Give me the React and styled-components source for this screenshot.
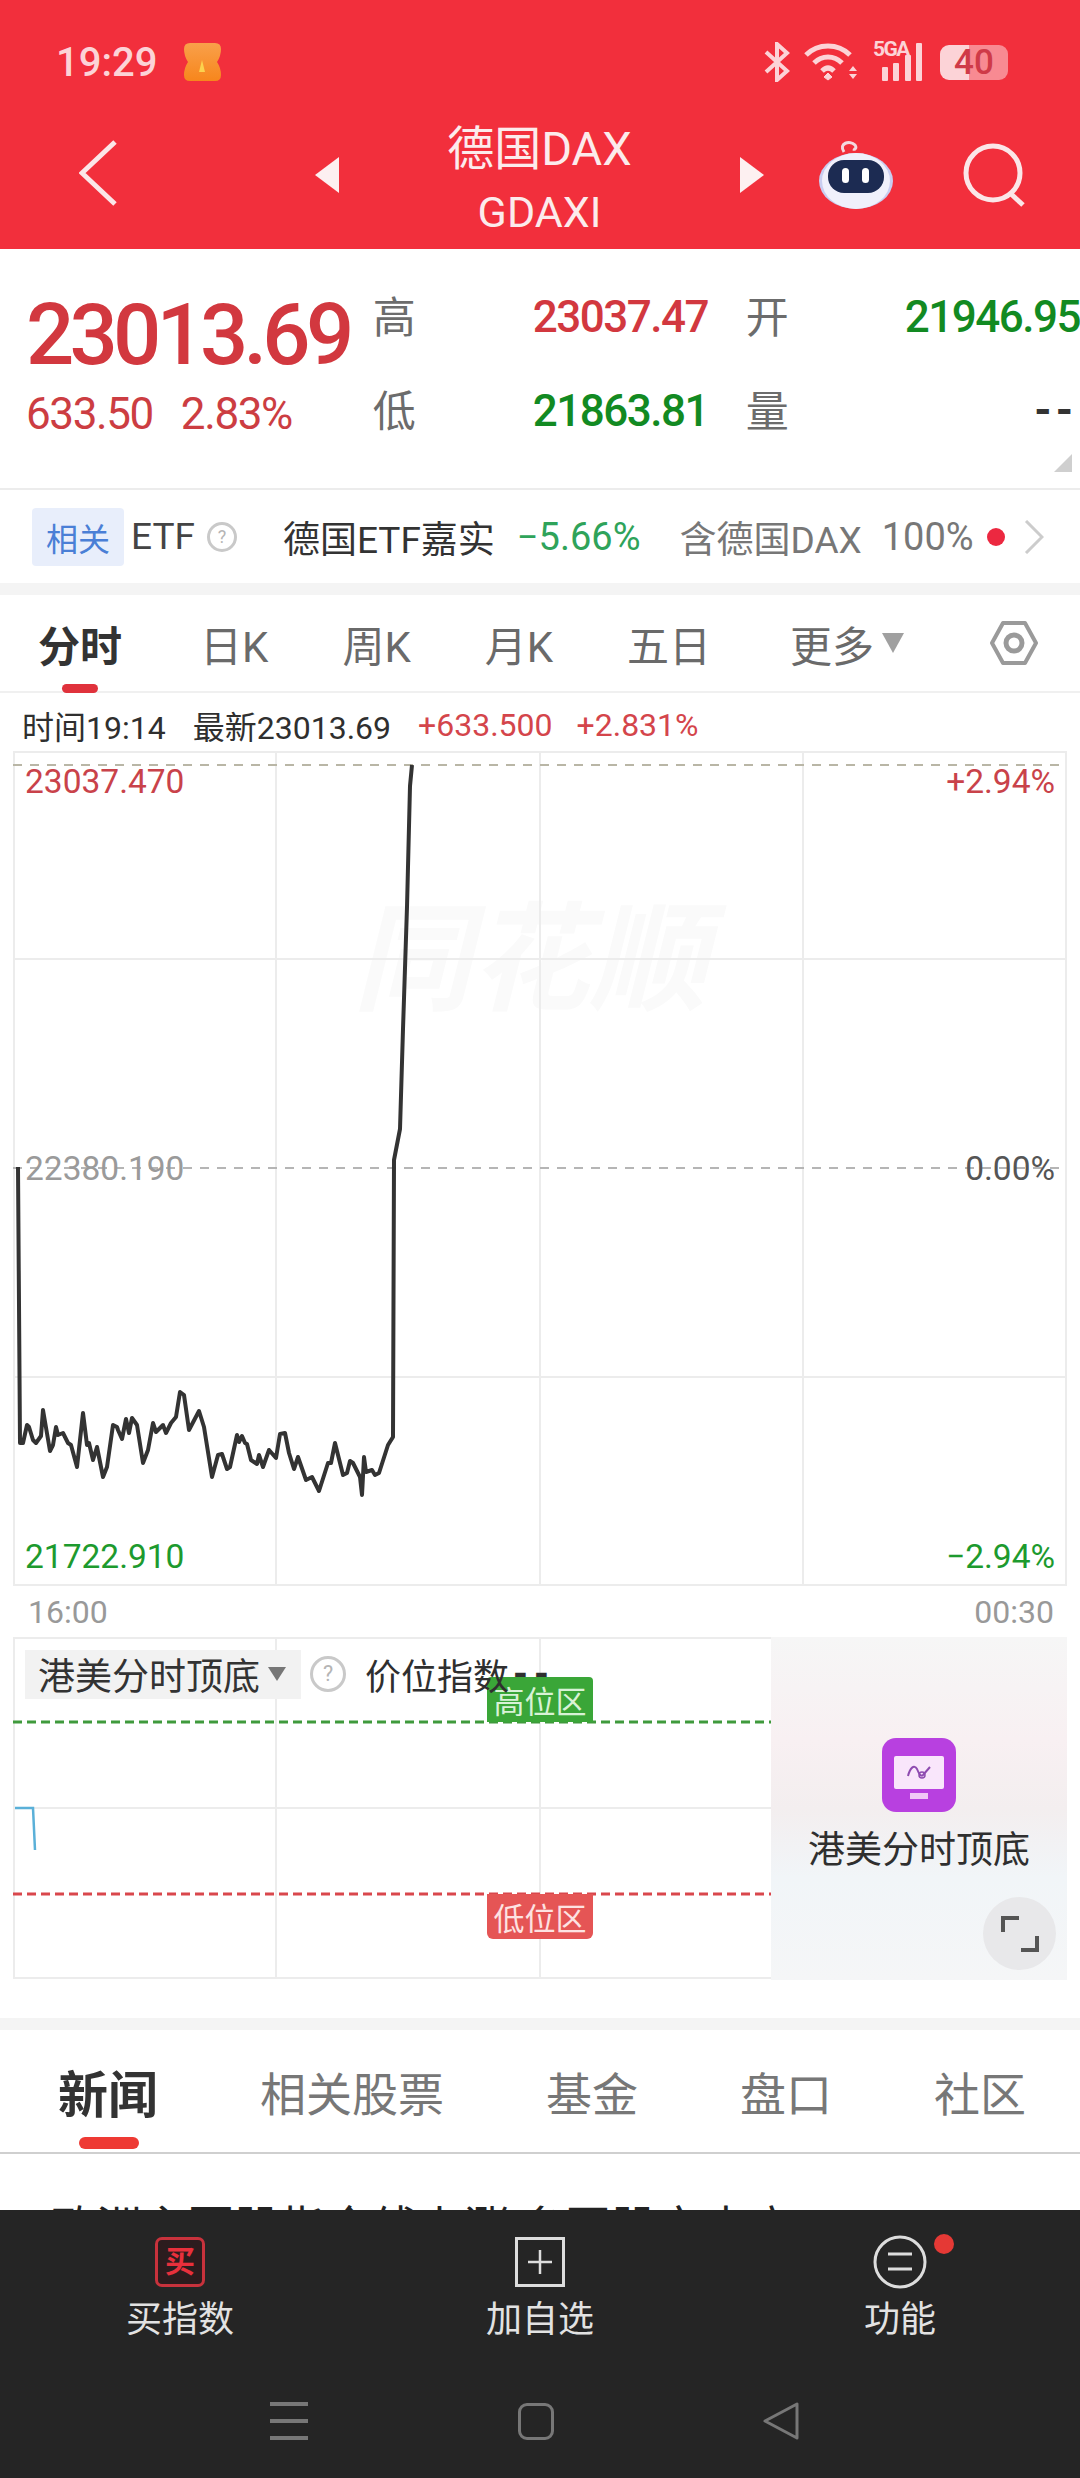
import React from "react"
import styled, { createGlobalStyle } from "styled-components"

const GlobalStyle = createGlobalStyle`
  html, body {
    margin: 0;
    padding: 0;
    background: #fff;
    font-family: Roboto, "Noto Sans CJK SC", sans-serif;
  }
  * {
    box-sizing: border-box;
  }
`

const RED = "#d2383f"
const GREEN = "#128a22"

const Page = styled.div`
  width: 1080px;
  height: 2478px;
  overflow: hidden;
  display: flex;
  flex-direction: column;
  background: #fff;
`

const Content = styled.div`
  height: 2210px;
  overflow: hidden;
`

/* red header */
const Header = styled.header`
  height: 249px;
  background: #f22f3c;
  color: #fcebec;
`

const StatusBar = styled.div`
  height: 122px;
  padding: 2px 72px 0 56px;
  display: flex;
  align-items: center;
`

const Clock = styled.span`
  font-size: 40px;
  font-weight: 500;
  color: #fcd3d7;
`

const AppBadge = styled.svg`
  margin-left: 27px;
`

const StatusIcons = styled.div`
  margin-left: auto;
  display: flex;
  align-items: center;
`

const SignalWrap = styled.div`
  position: relative;
  width: 50px;
  height: 38px;
  margin-left: 15px;
`

const SignalLabel = styled.span`
  position: absolute;
  left: 0;
  top: -6px;
  font-size: 21px;
  font-weight: 700;
  letter-spacing: -1.6px;
  color: #fcd3d7;
`

const Battery = styled.div`
  width: 68px;
  height: 35px;
  margin-left: 17px;
  border-radius: 9px;
  background: linear-gradient(90deg, #fcd3d7 0 42%, #f88a92 42% 100%);
  display: flex;
  align-items: center;
  justify-content: center;
  font-size: 35px;
  font-weight: 500;
  color: #cf3a48;
`

const NavRow = styled.div`
  height: 127px;
  display: grid;
  grid-template-columns: 315px 24px 1fr 24px 316px;
  grid-template-rows: 105px;
  align-items: center;
`

const BackSlot = styled.div`
  padding-left: 79px;
  display: flex;
  margin-top: -4px;
`

const TitleBlock = styled.div`
  display: flex;
  flex-direction: column;
  align-items: center;
  margin-top: 8px;
`

const Title = styled.div`
  font-size: 47px;
  line-height: 56px;
`

const SubTitle = styled.div`
  font-size: 43px;
  line-height: 50px;
  margin-top: 10px;
`

const NavActions = styled.div`
  display: flex;
  align-items: center;
  padding-left: 54px;
  gap: 69px;
`

/* quote block */
const Quote = styled.section`
  height: 241px;
  display: flex;
  border-bottom: 2px solid #ececec;
  position: relative;
`

const PriceColumn = styled.div`
  width: 374px;
  padding: 44px 0 0 26px;
`

const Price = styled.div`
  font-size: 85px;
  line-height: 84px;
  font-weight: 500;
  letter-spacing: -4.8px;
  color: ${RED};
`

const ChangeRow = styled.div`
  margin-top: 13px;
  display: flex;
  gap: 28px;
  font-size: 44px;
  line-height: 48px;
  letter-spacing: -1.4px;
  color: #cc3d42;
`

const StatGrid = styled.div`
  flex: 1;
  display: grid;
  grid-template-columns: 160px 213px 159px 1fr;
  grid-auto-rows: 94px;
  padding-top: 20px;
  align-items: center;
`

const StatName = styled.span`
  font-size: 43px;
  color: #6c6c6c;
  margin-top: -5px;
`

const StatValue = styled.span`
  font-size: 44px;
  font-weight: 500;
  letter-spacing: -1.5px;
  white-space: nowrap;
  margin-top: 2px;
  color: ${p => p.$color};
`

const StatDash = styled.span`
  font-size: 44px;
  font-weight: 700;
  letter-spacing: 4px;
  color: #333;
  text-align: right;
  padding-right: 3px;
`

const CornerMark = styled.div`
  position: absolute;
  right: 8px;
  bottom: 16px;
  width: 0;
  height: 0;
  border-left: 18px solid transparent;
  border-bottom: 18px solid #cfcfcf;
`

/* related etf strip */
const EtfRow = styled.div`
  height: 93px;
  padding-left: 32px;
  display: flex;
  align-items: center;
`

const EtfChip = styled.span`
  width: 92px;
  height: 58px;
  border-radius: 4px;
  background: #e8eefb;
  color: #4a7fd6;
  font-size: 32px;
  display: flex;
  align-items: center;
  justify-content: center;
`

const EtfText = styled.span`
  font-size: ${p => p.$size || 37}px;
  color: ${p => p.$color || "#444"};
  margin-left: ${p => p.$gap || 0}px;
  white-space: nowrap;
`

const Help = styled.span`
  width: ${p => p.$size}px;
  height: ${p => p.$size}px;
  margin-left: ${p => p.$gap}px;
  flex: none;
  border: 3px solid #c9c9c9;
  border-radius: 50%;
  color: #b5b5b5;
  font-size: ${p => p.$size * 0.6}px;
  line-height: 1;
  display: flex;
  align-items: center;
  justify-content: center;
`

const RedDot = styled.span`
  width: 18px;
  height: 18px;
  margin-left: 13px;
  border-radius: 50%;
  background: #ec2840;
  flex: none;
`

const EtfArrow = styled.svg`
  margin-left: 19px;
  flex: none;
`

const Band = styled.div`
  height: 12px;
  background: #f4f4f4;
`

/* period tabs */
const PeriodTabs = styled.nav`
  height: 98px;
  padding: 0 0 0 38px;
  display: flex;
  align-items: center;
  gap: 74px;
  border-bottom: 2px solid #f0f0f0;
`

const PeriodTab = styled.span`
  position: relative;
  margin-left: ${p => p.$nudge || 0}px;
  font-size: 42px;
  font-weight: ${p => (p.$active ? 700 : 400)};
  color: ${p => (p.$active ? "#333" : "#6a6a6a")};
  white-space: nowrap;
  display: flex;
  align-items: center;
  gap: 8px;

  ${p =>
    p.$active &&
    `
    &::after {
      content: "";
      position: absolute;
      left: 24px;
      width: 36px;
      height: 9px;
      bottom: -19px;
      border-radius: 5px;
      background: #e0323c;
    }
  `}
`

const PeriodCaret = styled.i`
  width: 0;
  height: 0;
  border-left: 11px solid transparent;
  border-right: 11px solid transparent;
  border-top: 20px solid #a0a0a0;
`

const SettingsIcon = styled.svg`
  margin-left: 11px;
`

const InfoRow = styled.div`
  height: 58px;
  padding: 6px 0 0 22px;
  display: flex;
  align-items: center;
  font-size: 32px;
  color: #2f2f2f;
  white-space: nowrap;
`

const InfoItem = styled.span`
  margin-right: ${p => p.$gap}px;
  color: ${p => p.$color || "inherit"};
`

/* main chart */
const Chart = styled.div`
  position: relative;
  width: 1054px;
  height: 835px;
  margin-left: 13px;
`

const ChartSvg = styled.svg`
  position: absolute;
  left: 0;
  top: 0;
`

const Watermark = styled.div`
  position: absolute;
  left: 340px;
  top: 140px;
  font-size: 118px;
  line-height: 140px;
  font-weight: 700;
  font-style: italic;
  color: #fafafa;
  white-space: nowrap;
`

const AxisLabels = styled.div`
  position: absolute;
  inset: 0;
  padding: 10px 12px 10px 12px;
  display: flex;
  flex-direction: column;
  justify-content: space-between;
`

const AxisRow = styled.div`
  height: 40px;
  display: flex;
  justify-content: space-between;
  align-items: center;
  font-size: 33.5px;
  color: ${p => p.$color};
`

const RightValue = styled.span`
  color: ${p => p.$color || "inherit"};
`

const TimeRow = styled.div`
  height: 51px;
  padding: 0 26px 0 28px;
  display: flex;
  justify-content: space-between;
  align-items: center;
  font-size: 32px;
  color: #999;
`

/* indicator chart */
const SubChart = styled.div`
  width: 1054px;
  height: 343px;
  margin-left: 13px;
  display: flex;
`

const SubPlot = styled.div`
  position: relative;
  width: 758px;
`

const SubHeader = styled.div`
  position: relative;
  padding: 11px 0 0 12px;
  display: flex;
  align-items: center;
`

const Selector = styled.div`
  width: 276px;
  height: 49px;
  padding-left: 13px;
  background: #f2f2f2;
  display: flex;
  align-items: center;
  gap: 8px;
  font-size: 37px;
  color: #333;
  white-space: nowrap;
`

const SelectorCaret = styled.i`
  width: 0;
  height: 0;
  border-left: 9px solid transparent;
  border-right: 9px solid transparent;
  border-top: 14px solid #777;
`

const SubValue = styled.span`
  position: relative;
  z-index: 1;
  margin-left: 19px;
  font-size: 36px;
  color: #2f2f2f;
  white-space: nowrap;
  display: flex;
  align-items: center;
`

const SubDash = styled.span`
  font-weight: 700;
  font-size: 38px;
  letter-spacing: 6px;
  margin-left: 4px;
`

const ZoneChip = styled.div`
  position: absolute;
  left: 474px;
  top: ${p => p.$top}px;
  width: 106px;
  height: 45px;
  background: ${p => p.$bg};
  color: ${p => p.$color};
  border-radius: ${p => p.$radius};
  font-size: 31px;
  display: flex;
  align-items: center;
  justify-content: center;
`

const SidePanel = styled.div`
  position: relative;
  flex: 1;
  padding-top: 101px;
  display: flex;
  flex-direction: column;
  align-items: center;
  background: linear-gradient(180deg, #f6f6f6 0%, #f8f0f2 30%, #f3eeef 50%, #f1f5f8 70%, #f5f6f7 100%);
`

const SideLabel = styled.div`
  margin-top: 15px;
  font-size: 37px;
  line-height: 48px;
  color: #2f2f2f;
`

const ExpandButton = styled.div`
  position: absolute;
  right: 11px;
  bottom: 10px;
  width: 73px;
  height: 73px;
  border-radius: 50%;
  background: #e8e8ea;
  display: flex;
  align-items: center;
  justify-content: center;
`

const SectionGap = styled.div`
  height: 38px;
`

/* news */
const NewsTabs = styled.nav`
  height: 124px;
  padding: 0 54px 0 58px;
  display: flex;
  justify-content: space-between;
  align-items: center;
  border-bottom: 2px solid #cfcfcf;
`

const NewsTab = styled.span`
  position: relative;
  font-size: ${p => (p.$active ? 50 : 46)}px;
  font-weight: ${p => (p.$active ? 700 : 400)};
  color: ${p => (p.$active ? "#333" : "#777")};
  white-space: nowrap;

  ${p =>
    p.$active &&
    `
    &::after {
      content: "";
      position: absolute;
      left: 21px;
      width: 60px;
      height: 12px;
      bottom: -22px;
      border-radius: 6px;
      background: #ee3a34;
    }
  `}
`

const Headline = styled.div`
  padding: 44px 0 0 50px;
  font-size: 46px;
  line-height: 60px;
  color: #222;
  white-space: nowrap;
`

/* bottom bar */
const BottomBar = styled.footer`
  flex: 1;
  background: #252525;
  display: flex;
  flex-direction: column;
`

const Actions = styled.div`
  padding-top: 26px;
  display: grid;
  grid-template-columns: repeat(3, 1fr);
`

const ActionItem = styled.div`
  position: relative;
  display: flex;
  flex-direction: column;
  align-items: center;
  gap: 8px;
  font-size: 36px;
  line-height: 48px;
  color: #e2e2e2;
`

const ActionIconBox = styled.div`
  height: 52px;
  display: flex;
  align-items: center;
  justify-content: center;
`

const BuyIcon = styled.div`
  width: 50px;
  height: 50px;
  border: 3px solid #c8323c;
  border-radius: 7px;
  background: #2c1c1e;
  color: #e8303c;
  font-size: 30px;
  font-weight: 700;
  display: flex;
  align-items: center;
  justify-content: center;
`

const Notice = styled.span`
  position: absolute;
  left: 214px;
  top: -2px;
  width: 20px;
  height: 20px;
  border-radius: 50%;
  background: #e53935;
`

const SystemNav = styled.div`
  margin-top: 58px;
  padding-left: 270px;
  display: flex;
  align-items: center;
  gap: 209px;
`

const SystemNavHome = styled.div`
  width: 36px;
  height: 37px;
  margin-left: 1px;
  border: 3px solid #777;
  border-radius: 9px;
`

const rise =
  "18,1167 20,1443 23,1443 27,1425 29,1427 33,1440 36,1443 41,1436 43,1410 50,1451 53,1445 56,1427 58,1435 63,1433 68,1443 71,1445 77,1467 83,1413 87,1445 89,1443 93,1460 97,1447 103,1477 107,1467 113,1425 117,1427 118,1430 122,1439 126,1419 129,1433 132,1418 137,1425 143,1463 148,1450 153,1423 156,1432 163,1425 166,1433 171,1423 176,1417 180,1392 184,1395 189,1430 199,1411 204,1427 212,1477 218,1455 222,1454 227,1469 230,1467 237,1435 239,1442 242,1436 245,1443 247,1444 251,1460 257,1464 259,1455 263,1467 269,1450 276,1458 280,1434 285,1433 289,1453 294,1469 298,1457 306,1480 312,1477 319,1491 328,1463 331,1463 335,1443 343,1475 347,1473 350,1461 353,1463 360,1477 362,1495 364,1457 366,1472 372,1470 375,1475 379,1473 388,1445 393,1437 394,1160 400,1129 403,1029 407,907 410,786 412,765"

const App = () => {
  return (
    <Page>
      <GlobalStyle />
      <Content>
        <Header>
          <StatusBar>
            <Clock>19:29</Clock>
            <AppBadge width="37" height="38" viewBox="0 0 37 38">
              <defs>
                <linearGradient id="badge" x1="0" y1="0" x2="0" y2="1">
                  <stop offset="0" stopColor="#f9a04a" />
                  <stop offset="1" stopColor="#f7861c" />
                </linearGradient>
              </defs>
              <path d="M6 0 H31 Q37 0 37 6 Q37 13 33 19 Q37 25 37 32 Q37 38 31 38 H6 Q0 38 0 32 Q0 25 4 19 Q0 13 0 6 Q0 0 6 0 Z" fill="url(#badge)" />
              <path d="M18 17 L21 29 H15 Z" fill="#fbd24e" />
            </AppBadge>
            <StatusIcons>
              <svg width="28" height="40" viewBox="0 0 28 40" fill="none" stroke="#fcd3d7" strokeWidth="4">
                <path d="M3 10 L24 29 L14 38 V2 L24 11 L3 30" />
              </svg>
              <svg width="54" height="38" viewBox="0 0 54 38" fill="none" stroke="#fcd3d7" strokeWidth="5" style={{ marginLeft: 13 }}>
                <path d="M2 12 C14 0 34 0 46 12" />
                <path d="M10 20 C18 12 30 12 38 20" />
                <path d="M18 28 C22 24 26 24 30 28" />
                <path d="M24 30 L28 34 L24 37 L20 34 Z" fill="#fcd3d7" strokeWidth="1" />
                <path d="M49 23 L53 28 H45 Z M45 31 H53 L49 36 Z" fill="#fcd3d7" stroke="none" />
              </svg>
              <SignalWrap>
                <SignalLabel>5GA</SignalLabel>
                <svg width="50" height="38" viewBox="0 0 50 38" fill="#fcd3d7">
                  <rect x="9" y="24" width="6" height="14" rx="1" />
                  <rect x="20" y="20" width="6" height="18" rx="1" />
                  <rect x="32" y="12" width="6" height="26" rx="1" />
                  <rect x="43" y="0" width="6" height="38" rx="1" />
                </svg>
              </SignalWrap>
              <Battery>40</Battery>
            </StatusIcons>
          </StatusBar>
          <NavRow>
            <BackSlot>
              <svg width="38" height="66" viewBox="0 0 38 66" fill="none" stroke="#fbe6e8" strokeWidth="5">
                <path d="M36 2 L3 33 L36 64" />
              </svg>
            </BackSlot>
            <svg width="24" height="36" viewBox="0 0 24 36">
              <path d="M24 0 V36 L0 18 Z" fill="#fdf0f1" />
            </svg>
            <TitleBlock>
              <Title>德国DAX</Title>
              <SubTitle>GDAXI</SubTitle>
            </TitleBlock>
            <svg width="24" height="36" viewBox="0 0 24 36">
              <path d="M0 0 V36 L24 18 Z" fill="#fdf0f1" />
            </svg>
            <NavActions>
              <svg width="76" height="70" viewBox="0 0 76 70">
                <path d="M26 12 C20 3 32 0 37 5 C39 8 37 10 35 9" fill="none" stroke="#f3d9e0" strokeWidth="3" />
                <ellipse cx="38" cy="41" rx="37" ry="28" fill="#c9cdf0" />
                <ellipse cx="38" cy="41" rx="34" ry="28" fill="#f0f0fb" />
                <rect x="10" y="20" width="56" height="33" rx="16" fill="#1c2b52" />
                <rect x="24" y="28" width="7" height="15" rx="3.5" fill="#fff" />
                <rect x="44" y="28" width="7" height="15" rx="3.5" fill="#fff" />
              </svg>
              <svg width="62" height="64" viewBox="0 0 62 64" fill="none" stroke="#fbe6e8" strokeWidth="5">
                <circle cx="30" cy="30" r="27" />
                <path d="M47 50 L60 62" />
              </svg>
            </NavActions>
          </NavRow>
        </Header>

        <Quote>
          <PriceColumn>
            <Price>23013.69</Price>
            <ChangeRow>
              <span>633.50</span>
              <span>2.83%</span>
            </ChangeRow>
          </PriceColumn>
          <StatGrid>
            <StatName>高</StatName>
            <StatValue $color={RED}>23037.47</StatValue>
            <StatName>开</StatName>
            <StatValue $color={GREEN}>21946.95</StatValue>
            <StatName>低</StatName>
            <StatValue $color={GREEN}>21863.81</StatValue>
            <StatName>量</StatName>
            <StatDash>--</StatDash>
          </StatGrid>
          <CornerMark />
        </Quote>

        <EtfRow>
          <EtfChip>相关</EtfChip>
          <EtfText $gap={7}>ETF</EtfText>
          <Help $size={30} $gap={12}>?</Help>
          <EtfText $gap={46} $color="#333">德国ETF嘉实</EtfText>
          <EtfText $size={38} $gap={22} $color="#2fa35a">−5.66%</EtfText>
          <EtfText $gap={39} $color="#777">含德国DAX</EtfText>
          <EtfText $size={38} $gap={20} $color="#777">100%</EtfText>
          <RedDot />
          <EtfArrow width="20" height="34" viewBox="0 0 20 34" fill="none" stroke="#ccc" strokeWidth="3">
            <path d="M2 1 L18 17 L2 33" />
          </EtfArrow>
        </EtfRow>
        <Band />

        <PeriodTabs>
          <PeriodTab $active>分时</PeriodTab>
          <PeriodTab $nudge={4}>日K</PeriodTab>
          <PeriodTab>周K</PeriodTab>
          <PeriodTab>月K</PeriodTab>
          <PeriodTab>五日</PeriodTab>
          <PeriodTab $nudge={5}>
            更多
            <PeriodCaret />
          </PeriodTab>
          <SettingsIcon width="50" height="46" viewBox="0 0 50 46" fill="none" stroke="#9a9a9a" strokeWidth="4">
            <path d="M14 3 H36 L47 23 L36 43 H14 L3 23 Z" strokeLinejoin="round" />
            <circle cx="25" cy="23" r="8" strokeWidth="5" />
          </SettingsIcon>
        </PeriodTabs>

        <InfoRow>
          <InfoItem $gap={27}>时间19:14</InfoItem>
          <InfoItem $gap={27}>最新23013.69</InfoItem>
          <InfoItem $gap={24} $color="#d4454b">+633.500</InfoItem>
          <InfoItem $gap={0} $color="#d4454b">+2.831%</InfoItem>
        </InfoRow>

        <Chart>
          <Watermark>同花顺</Watermark>
          <ChartSvg width="1054" height="835" viewBox="13 751 1054 835" fill="none">
            <g stroke="#ececec" strokeWidth="2">
              <rect x="14" y="752" width="1052" height="833" />
              <path d="M276 751 V1586 M540 751 V1586 M803 751 V1586" />
              <path d="M13 959 H1067 M13 1377 H1067" />
            </g>
            <path d="M13 765 H1067" stroke="#b9b6a6" strokeWidth="2" strokeDasharray="9 8" />
            <path d="M13 1168 H1067" stroke="#b5b5b5" strokeWidth="2" strokeDasharray="9 8" />
            <polyline points={rise} stroke="#333" strokeWidth="4" strokeLinejoin="round" />
          </ChartSvg>
          <AxisLabels>
            <AxisRow $color="#c9424a">
              <span>23037.470</span>
              <span>+2.94%</span>
            </AxisRow>
            <AxisRow $color="#9a9a9a">
              <span>22380.190</span>
              <RightValue $color="#555">0.00%</RightValue>
            </AxisRow>
            <AxisRow $color="#1d9a2e">
              <span>21722.910</span>
              <span>−2.94%</span>
            </AxisRow>
          </AxisLabels>
        </Chart>
        <TimeRow>
          <span>16:00</span>
          <span>00:30</span>
        </TimeRow>

        <SubChart>
          <SubPlot>
            <ChartSvg width="758" height="343" viewBox="13 1637 758 343" fill="none">
              <g stroke="#ececec" strokeWidth="2">
                <path d="M14 1637 V1979 M13 1638 H771 M13 1978 H771" />
                <path d="M276 1637 V1979 M540 1637 V1979" />
                <path d="M13 1808 H771" />
              </g>
              <path d="M13 1722 H771" stroke="#3f9a3c" strokeWidth="3" strokeDasharray="9 5" />
              <path d="M13 1894 H771" stroke="#d9474c" strokeWidth="3" strokeDasharray="9 5" />
              <path d="M15 1808 H33 L35 1850" stroke="#5ab0d8" strokeWidth="2.5" />
            </ChartSvg>
            <ZoneChip $top={40} $bg="#3aa638" $color="#d8f2d6" $radius="4px 4px 0 0">高位区</ZoneChip>
            <ZoneChip $top={257} $bg="#e55555" $color="#fde2e2" $radius="0 0 6px 6px">低位区</ZoneChip>
            <SubHeader>
              <Selector>
                港美分时顶底
                <SelectorCaret />
              </Selector>
              <Help $size={36} $gap={9}>?</Help>
              <SubValue>
                价位指数
                <SubDash>--</SubDash>
              </SubValue>
            </SubHeader>
          </SubPlot>
          <SidePanel>
            <svg width="74" height="74" viewBox="0 0 74 74">
              <rect width="74" height="74" rx="14" fill="#b840e0" />
              <rect x="12" y="18" width="50" height="33" rx="2" fill="#f9e6fb" />
              <rect x="28" y="55" width="18" height="6" fill="#f0c8f6" />
              <path d="M26 38 C28 30 32 26 35 31 C37 36 39 39 41 37 L48 29" fill="none" stroke="#8e4bb0" strokeWidth="2" />
              <circle cx="40" cy="37" r="3" fill="none" stroke="#8e4bb0" strokeWidth="1.5" />
            </svg>
            <SideLabel>港美分时顶底</SideLabel>
            <ExpandButton>
              <svg width="38" height="36" viewBox="0 0 38 36" fill="none" stroke="#555" strokeWidth="4">
                <path d="M2 16 V2 H18" />
                <path d="M36 20 V34 H20" />
              </svg>
            </ExpandButton>
          </SidePanel>
        </SubChart>

        <SectionGap />
        <Band />

        <NewsTabs>
          <NewsTab $active>新闻</NewsTab>
          <NewsTab>相关股票</NewsTab>
          <NewsTab>基金</NewsTab>
          <NewsTab>盘口</NewsTab>
          <NewsTab>社区</NewsTab>
        </NewsTabs>
        <Headline>欧洲主要股指全线上涨,多国股市走高</Headline>
      </Content>

      <BottomBar>
        <Actions>
          <ActionItem>
            <ActionIconBox>
              <BuyIcon>买</BuyIcon>
            </ActionIconBox>
            买指数
          </ActionItem>
          <ActionItem>
            <ActionIconBox>
              <svg width="50" height="50" viewBox="0 0 50 50" fill="none" stroke="#ddd" strokeWidth="3">
                <rect x="1.5" y="1.5" width="47" height="47" />
                <path d="M25 13 V37 M13 25 H37" strokeWidth="2.5" />
              </svg>
            </ActionIconBox>
            加自选
          </ActionItem>
          <ActionItem>
            <ActionIconBox>
              <svg width="54" height="54" viewBox="0 0 54 54" fill="none" stroke="#ddd" strokeWidth="3">
                <circle cx="27" cy="27" r="25" />
                <path d="M15 19 H39 M15 34 H39" />
              </svg>
            </ActionIconBox>
            功能
            <Notice />
          </ActionItem>
        </Actions>
        <SystemNav>
          <svg width="38" height="38" viewBox="0 0 38 38" fill="#777">
            <rect y="0" width="38" height="4" />
            <rect y="17" width="38" height="4" />
            <rect y="34" width="38" height="4" />
          </svg>
          <SystemNavHome />
          <svg width="36" height="38" viewBox="0 0 36 38" fill="none" stroke="#777" strokeWidth="3" strokeLinejoin="round">
            <path d="M34 2 V36 L2 19 Z" />
          </svg>
        </SystemNav>
      </BottomBar>
    </Page>
  )
}

export default App
